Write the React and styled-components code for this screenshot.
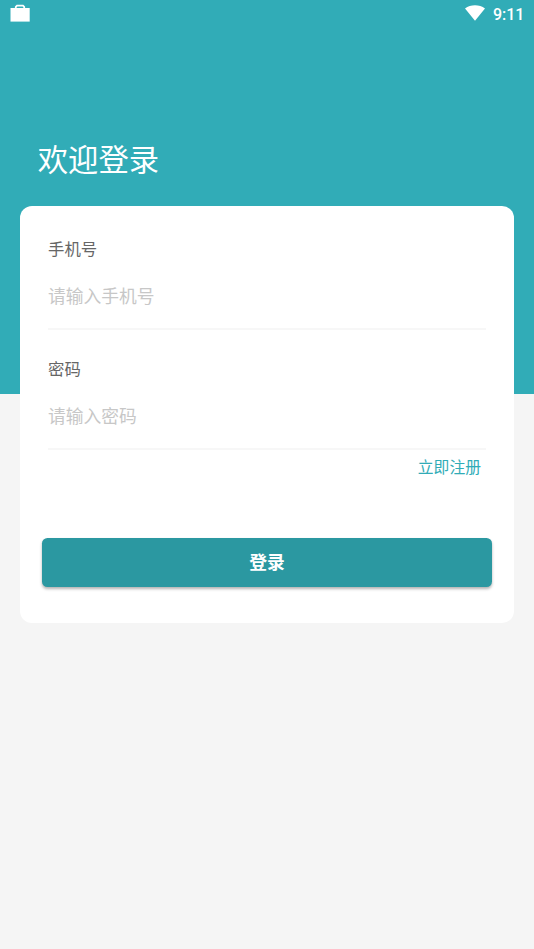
import React from "react";
import styled, { createGlobalStyle } from "styled-components";

export default function App() {
  return (
    <Screen>
      <GlobalStyle />
      <StatusBar>
        <BagIcon />
        <StatusGroup>
          <WifiIcon />
          <Clock>9:11</Clock>
        </StatusGroup>
      </StatusBar>
      <Title>欢迎登录</Title>
      <Card onSubmit={e => e.preventDefault()}>
        <FieldGroup>
          <Label htmlFor="phone">手机号</Label>
          <Input id="phone" type="tel" placeholder="请输入手机号" />
        </FieldGroup>
        <FieldGroup>
          <Label htmlFor="password">密码</Label>
          <Input id="password" type="password" placeholder="请输入密码" />
        </FieldGroup>
        <RegisterLink href="#">立即注册</RegisterLink>
        <Button type="submit">登录</Button>
      </Card>
    </Screen>
  );
}

const BagIcon = () => (
  <svg width="20" height="18" viewBox="0 0 20 18">
    <path d="M0.5 4H19.7V17.6H0.5Z" fill="#fff" />
    <path d="M5.8 4.2V2.8L7 1.7H13L14.2 2.8V4.2" fill="none" stroke="#fff" strokeWidth="1.8" />
  </svg>
);

const WifiIcon = () => (
  <svg width="20" height="16" viewBox="0 0 20 16">
    <path d="M0 3.6C5.6 -0.8 14.4 -0.8 20 3.6L10 15.8Z" fill="#fff" />
  </svg>
);

const GlobalStyle = createGlobalStyle`
  * {
    box-sizing: border-box;
  }

  body {
    margin: 0;
    font-family: "Noto Sans CJK SC", sans-serif;
  }
`;

const Screen = styled.div`
  display: flex;
  flex-direction: column;
  height: 100vh;
  min-height: 949px;
  background: linear-gradient(#31acb7 394px, #f5f5f5 394px);
`;

const StatusBar = styled.div`
  display: flex;
  justify-content: space-between;
  align-items: flex-start;
  height: 28px;
  padding: 4px 9.6px 0 10px;
`;

const StatusGroup = styled.div`
  display: flex;
  align-items: flex-start;
  gap: 8px;
  padding-top: 1px;
`;

const Clock = styled.span`
  font-family: Roboto, sans-serif;
  font-size: 16px;
  font-weight: 500;
  line-height: 20px;
  color: #fff;
`;

const Title = styled.h1`
  margin: 107px 0 0 37.8px;
  font-size: 30.3px;
  font-weight: 400;
  line-height: 46px;
  color: #fff;
`;

const Card = styled.form`
  display: flex;
  flex-direction: column;
  height: 417.3px;
  margin: 24.7px 20px 0;
  padding: 22.3px 22px;
  border-radius: 12px;
  background: #fff;
`;

const FieldGroup = styled.div`
  display: flex;
  flex-direction: column;
  height: 102px;
  margin: 0 6px 18px;
  border-bottom: 2px solid #f7f7f7;
`;

const Label = styled.label`
  padding-top: 7px;
  font-size: 16.4px;
  line-height: 26px;
  color: #666;
`;

const Input = styled.input`
  height: 30px;
  margin-top: 19px;
  padding: 0;
  border: 0;
  outline: 0;
  font-family: inherit;
  font-size: 17.75px;
  color: #666;
  background: transparent;

  &::placeholder {
    color: #c7c7c7;
    opacity: 1;
  }
`;

const RegisterLink = styled.a`
  align-self: flex-end;
  margin: -13px 11px 0 0;
  font-size: 15.8px;
  line-height: 24px;
  color: #31acb7;
  text-decoration: none;
`;

const Button = styled.button`
  height: 48.7px;
  margin-top: 59.5px;
  padding: 0 0 3px;
  border: 0;
  border-radius: 5.5px;
  font-family: inherit;
  font-size: 17.8px;
  font-weight: 700;
  color: #fff;
  background: #2b98a1;
  box-shadow: 0 2px 3px rgba(0, 0, 0, 0.3);
  cursor: pointer;
`;
